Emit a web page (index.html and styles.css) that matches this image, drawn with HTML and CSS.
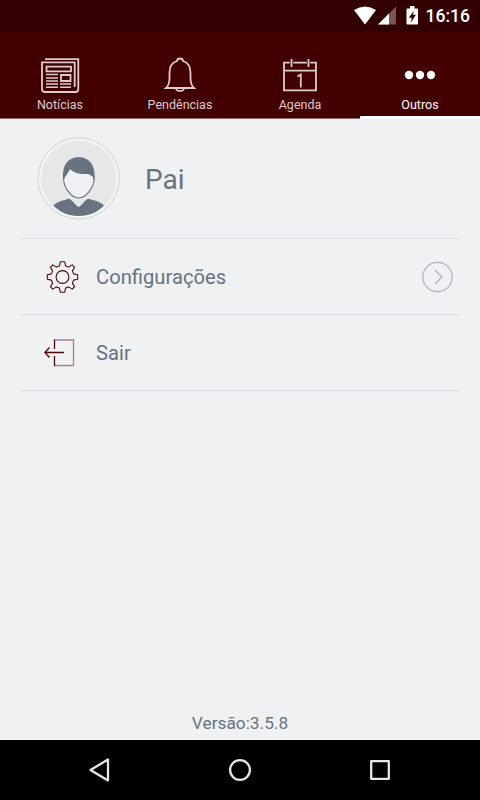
FILE: index.html
```html
<!DOCTYPE html>
<html lang="pt-BR">
<head>
    <meta charset="UTF-8">
    <meta name="viewport" content="width=device-width, initial-scale=1.0">
    <title>Outros</title>
    <link rel="stylesheet" href="styles.css">
</head>
<body>
    <div class="status-bar">
        <svg class="status-icons" width="65" height="24" viewBox="0 0 65 24">
            <path fill="#fff" d="M0 6Q11 -1 22 6L11 20.500Z"/>
            <path fill="#7a5555" d="M42 2.500V20.500H24Z"/>
            <path fill="#fff" d="M35 9.500V20.500H24Z"/>
            <path fill="#fff" d="M53.500 4.500h2.500v-2.500h4.500v2.500h2.500a1 1 0 0 1 1 1v14a1 1 0 0 1-1 1h-9.500a1 1 0 0 1-1-1v-14a1 1 0 0 1 1-1z"/>
            <path fill="#330000" d="M60 6.500L54.800 13.700h3l-.9 5 5-7.900h-3.100z"/>
        </svg>
        <span class="clock">16:16</span>
    </div>
    <nav class="tabs">
        <a class="tab">
            <svg class="tab-icon" width="40" height="38" viewBox="0 0 40 38" fill="none" stroke="#dccccc" stroke-width="1.800">
                <path d="M5 3.200H38.300V33Q38.300 36 35.500 36H4.500Q2 36 2 33V6.300H34.700V31"/>
                <path d="M6.500 10.700H31V15.300H6.500z"/>
                <path d="M21 19H30.500V25H21z"/>
                <path stroke-width="1.400" d="M6 18.500H18M6 22H18M6 25H18M6 28H18M20 28H31M6 31.300H18M20 31.300H31"/>
            </svg>
            <span>Notícias</span>
        </a>
        <a class="tab">
            <svg class="tab-icon" width="40" height="38" viewBox="0 0 40 38" fill="none" stroke="#dccccc" stroke-width="1.800">
                <path d="M6 32C9 29.500 9.500 27 9.500 22V17C9.500 10 12 6.500 17 5Q17.300 2.500 20 2.500T23 5C28 6.500 30.500 10 30.500 17V22C30.500 27 31 29.500 34 32z"/>
                <path stroke-width="1.500" d="M15.700 32A4.400 3.900 0 0 0 24.300 32"/>
            </svg>
            <span>Pendências</span>
        </a>
        <a class="tab">
            <svg class="tab-icon" width="40" height="38" viewBox="0 0 40 38" fill="none" stroke="#dccccc" stroke-width="1.800">
                <path d="M9.800 6.700H4V34.300H36V6.700H30.200M13.200 6.700H26.800M4 14.700H36"/>
                <path d="M11.500 3V11M28.500 3V11"/>
                <path d="M17.300 20.500L20.800 18.500V31.500"/>
            </svg>
            <span>Agenda</span>
        </a>
        <a class="tab active">
            <svg class="tab-icon" width="40" height="38" viewBox="0 0 40 38" fill="#fff">
                <circle cx="9" cy="19" r="4.200"/>
                <circle cx="20" cy="19" r="4.200"/>
                <circle cx="31" cy="19" r="4.200"/>
            </svg>
            <span>Outros</span>
        </a>
    </nav>
    <main class="content">
        <div class="profile">
            <svg class="avatar" width="84" height="84" viewBox="51 36 252 252">
                <circle cx="176" cy="160" r="122" fill="#f3f4f6" stroke="#cfd1d4" stroke-width="3"/>
                <circle cx="176" cy="160" r="113" fill="#e5e7e9"/>
                <g fill="#687381">
                    <path fill="#f0f1f3" stroke="#687381" stroke-width="3.500" d="M131 155C128 188 155 219 176 219S225 188 222 155L206 145 150 130z"/>
                    <path d="M130 168C124 120 145 97 176 97S229 120 223 168C220 156 215 147 203 147C180 147 162 145 149 131C146 145 136 150 130 168z"/>
                    <path d="M100 241C115 228 130 226 147 221C157 224 165 240 176 246C187 240 195 224 205 221C222 226 237 228 252 241C235 262 205 273 176 273S117 262 100 241z"/>
                </g>
            </svg>
            <h1 class="name">Pai</h1>
        </div>
        <div class="row">
            <svg class="row-icon" width="36" height="34" viewBox="0 0 36 34" fill="none" stroke="#4d0808" stroke-width="1.100" stroke-linejoin="round">
                <path transform="translate(2.500 1)" d="M13.800.8h4.400l.9 4.100 3 1.200 3.600-2.200 2.400 2.400-2.200 3.600 1.200 3 4.100.9v4.400l-4.100.9-1.200 3 2.200 3.600-2.400 2.400-3.600-2.200-3 1.200-.9 4.100h-4.400l-.9-4.100-3-1.200-3.600 2.200-2.400-2.400 2.200-3.600-1.200-3-4.100-.9v-4.400l4.100-.9 1.200-3-2.200-3.600 2.400-2.400 3.600 2.200 3-1.200z"/>
                <circle cx="18.500" cy="17" r="6.400"/>
            </svg>
            <span class="label">Configurações</span>
            <svg class="arrow" width="32" height="32" viewBox="0 0 32 32" fill="none" stroke="#aeb1b7" stroke-width="1.200">
                <circle cx="16.500" cy="16" r="14.700"/>
                <path d="M14 9L21 16 14 23"/>
            </svg>
        </div>
        <div class="row">
            <svg class="row-icon" width="36" height="34" viewBox="0 0 36 34" fill="none" stroke="#4d0808" stroke-width="1.300">
                <path stroke="#a08489" d="M10.500 4H29.500V29.500H10.500"/>
                <path d="M10.500 3.500V13M10.500 20V30"/>
                <path d="M.8 16.500H20M5.500 11.500L.8 16.500 5.500 21.500"/>
            </svg>
            <span class="label">Sair</span>
        </div>
        <p class="version">Versão:3.5.8</p>
    </main>
    <div class="nav-bar">
        <svg width="24" height="24" viewBox="0 0 24 24"><path d="M2.500 12L20 1.500V22.500z"/></svg>
        <svg width="24" height="24" viewBox="0 0 24 24"><circle cx="12" cy="12" r="9.900"/></svg>
        <svg width="24" height="24" viewBox="0 0 24 24"><path d="M3.200 3.200H20.800V20.800H3.200z"/></svg>
    </div>
</body>
</html>
```
FILE: styles.css
```css
*{
    margin: 0;
    padding: 0;
    box-sizing: border-box;
}

body{
    width: 480px;
    height: 800px;
    display: flex;
    flex-direction: column;
    background-color: #eff1f3;
    font-family: Roboto, sans-serif;
    color: #687381;
    overflow: hidden;
}

.status-bar{
    height: 32px;
    background-color: #330000;
    display: flex;
    justify-content: flex-end;
    align-items: center;
    gap: 7px;
    padding-right: 10px;
}
.clock{
    font-size: 17.5px;
    font-weight: 500;
    color: #ffffff;
}

/* top tabs */
.tabs{
    height: 87px;
    display: flex;
    background-color: #420000;
}
.tab{
    flex: 1;
    display: flex;
    flex-direction: column;
    align-items: center;
    padding-top: 24px;
    font-size: 12.5px;
    line-height: 16px;
    color: #dccccc;
    border-bottom: 1px solid #8c6c6d;
}
.tab-icon{
    margin-bottom: 3px;
}
.tab.active{
    color: #ffffff;
    border-bottom: 3px solid #ffffff;
}

.content{
    flex: 1;
    display: flex;
    flex-direction: column;
    padding: 0 20px;
}
.profile{
    height: 120px;
    display: flex;
    align-items: center;
    padding-top: 1px;
    padding-left: 17px;
    gap: 24px;
    border-bottom: 1px solid #dddfe2;
}
.name{
    font-size: 28px;
    font-weight: 400;
}
.row{
    height: 76px;
    display: flex;
    align-items: center;
    padding: 0 7px 0 24px;
    border-bottom: 1px solid #d8dadd;
}
.label{
    flex: 1;
    margin-left: 16px;
    font-size: 20.2px;
}
.version{
    margin-top: auto;
    padding-bottom: 7px;
    text-align: center;
    font-size: 17.3px;
}

/* android buttons */
.nav-bar{
    height: 60px;
    display: flex;
    justify-content: center;
    align-items: center;
    gap: 116px;
    background-color: #000000;
}
.nav-bar svg{
    fill: none;
    stroke: #e6e6e6;
    stroke-width: 2.3;
    stroke-linejoin: round;
}
```
